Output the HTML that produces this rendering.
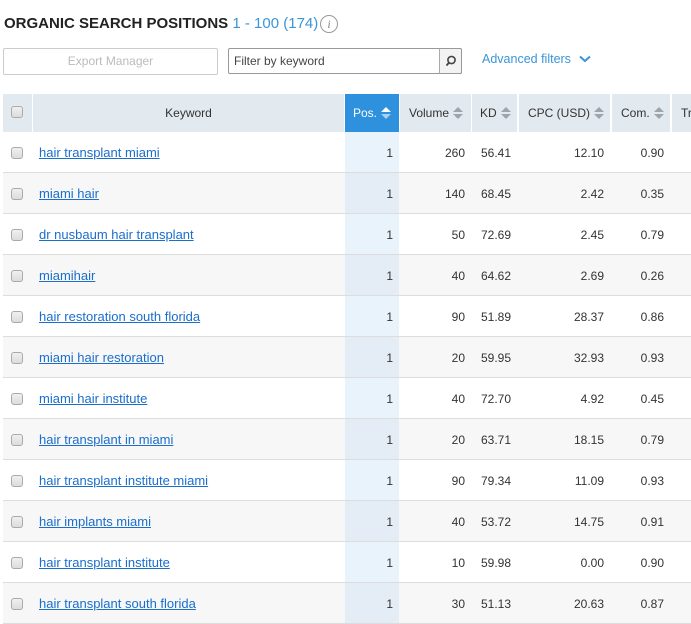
<!DOCTYPE html>
<html><head><meta charset="utf-8"><style>
*{margin:0;padding:0;box-sizing:border-box}
body{width:691px;height:622px;overflow:hidden;background:#fff;font-family:"Liberation Sans",Arial,sans-serif;position:relative;color:#333}
.a{position:absolute}
.title{left:4px;top:15px;font-size:15px;font-weight:bold;color:#222;white-space:nowrap}
.title span{font-weight:normal;color:#3b95d8}
.info{left:320px;top:15px;width:18px;height:18px;border:1px solid #999;border-radius:50%;font:italic 12px "Liberation Serif",serif;color:#888;text-align:center;line-height:16px}
.btn{left:3px;top:48px;width:215px;height:27px;border:1px solid #ccc;border-radius:2px;font-size:12px;color:#bbb;text-align:center;line-height:25px}
.inp{left:228px;top:48px;width:234px;height:26px;border:1px solid #999;border-radius:2px;font-size:12px;color:#444;line-height:24px;padding-left:5px}
.sb{left:439px;top:48px;width:23px;height:26px;border:1px solid #999;border-left:1px solid #aaa;background:#f3f3f3;border-radius:0 2px 2px 0}
.adv{left:482px;top:52px;font-size:12.5px;color:#3b95d8}
.h{top:94px;height:38px;background:#e2e9ef;font-size:12px;color:#333;line-height:38px;white-space:nowrap}
.cb{width:12px;height:12px;border:1px solid #aaa;border-radius:3px;background:linear-gradient(#f0f0f0,#dcdcdc)}
.r{left:3px;width:688px;height:41px;border-bottom:1px solid #ddd}
.g{background:#f7f7f7}
.t{font-size:12px;color:#333;white-space:nowrap}
.k{font-size:13px;color:#1a6ecc;text-decoration:underline;white-space:nowrap}
.ar{display:inline-block;vertical-align:middle;margin-left:4px;width:10px;height:14px;position:relative;top:-1px}
</style></head><body>
<div class="a title">ORGANIC SEARCH POSITIONS <span>1 - 100 (174)</span></div>
<div class="a info">i</div>
<div class="a btn">Export Manager</div>
<div class="a inp">Filter by keyword</div>
<div class="a sb"><svg width="21" height="24"><circle cx="11.5" cy="11" r="3.6" fill="none" stroke="#444" stroke-width="1.6"/><line x1="9" y1="13.6" x2="6.5" y2="16.5" stroke="#444" stroke-width="1.8"/></svg></div>
<div class="a adv">Advanced filters <svg width="12" height="8" style="margin-left:5px"><path d="M1 1.5L6 6L11 1.5" fill="none" stroke="#3b95d8" stroke-width="2"/></svg></div>

<div class="a h" style="left:3px;width:29px"><div class="a cb" style="left:8px;top:12px"></div></div>
<div class="a h" style="left:33px;width:311px;text-align:center">Keyword</div>
<div class="a h" style="left:345px;width:54px;background:#2d91dd;color:#fff;padding-left:8px">Pos.<svg class="ar" viewBox="0 0 10 14"><path d="M0 6L5 1L10 6Z" fill="#fff"/><path d="M0 8L10 8L5 13Z" fill="#a9d0f0"/></svg></div>
<div class="a h" style="left:400px;width:71px;padding-left:9px">Volume<svg class="ar" viewBox="0 0 10 14"><path d="M0 6L5 1L10 6Z" fill="#9aa5ae"/><path d="M0 8L10 8L5 13Z" fill="#9aa5ae"/></svg></div>
<div class="a h" style="left:472px;width:45px;padding-left:8px">KD<svg class="ar" viewBox="0 0 10 14"><path d="M0 6L5 1L10 6Z" fill="#9aa5ae"/><path d="M0 8L10 8L5 13Z" fill="#9aa5ae"/></svg></div>
<div class="a h" style="left:519px;width:91px;padding-left:9px">CPC (USD)<svg class="ar" viewBox="0 0 10 14"><path d="M0 6L5 1L10 6Z" fill="#9aa5ae"/><path d="M0 8L10 8L5 13Z" fill="#9aa5ae"/></svg></div>
<div class="a h" style="left:612px;width:58px;padding-left:9px">Com.<svg class="ar" viewBox="0 0 10 14"><path d="M0 6L5 1L10 6Z" fill="#9aa5ae"/><path d="M0 8L10 8L5 13Z" fill="#9aa5ae"/></svg></div>
<div class="a h" style="left:672px;width:19px;padding-left:9px">Tr</div>

<div id="rows"></div>
<script>
var d=[["hair transplant miami","260","56.41","12.10","0.90"],["miami hair","140","68.45","2.42","0.35"],["dr nusbaum hair transplant","50","72.69","2.45","0.79"],["miamihair","40","64.62","2.69","0.26"],["hair restoration south florida","90","51.89","28.37","0.86"],["miami hair restoration","20","59.95","32.93","0.93"],["miami hair institute","40","72.70","4.92","0.45"],["hair transplant in miami","20","63.71","18.15","0.79"],["hair transplant institute miami","90","79.34","11.09","0.93"],["hair implants miami","40","53.72","14.75","0.91"],["hair transplant institute","10","59.98","0.00","0.90"],["hair transplant south florida","30","51.13","20.63","0.87"]];
var h="";
d.forEach(function(r,i){var y=132+i*41;var g=i%2==1;
h+='<div class="a r'+(g?' g':'')+'" style="top:'+y+'px"></div>';
h+='<div class="a" style="left:345px;top:'+y+'px;width:54px;height:40px;background:'+(g?'#e4edf6':'#e8f3fc')+'"></div>';
var ty=y+14;
h+='<div class="a cb" style="left:11px;top:'+(y+15)+'px"></div>';
h+='<div class="a k" style="left:39px;top:'+(ty-1)+'px">'+r[0]+'</div>';
h+='<div class="a t" style="right:298px;top:'+ty+'px">1</div>';
h+='<div class="a t" style="right:226px;top:'+ty+'px">'+r[1]+'</div>';
h+='<div class="a t" style="left:481px;top:'+ty+'px">'+r[2]+'</div>';
h+='<div class="a t" style="right:87px;top:'+ty+'px">'+r[3]+'</div>';
h+='<div class="a t" style="right:27px;top:'+ty+'px">'+r[4]+'</div>';
});
document.getElementById("rows").innerHTML=h;
</script>
</body></html>
